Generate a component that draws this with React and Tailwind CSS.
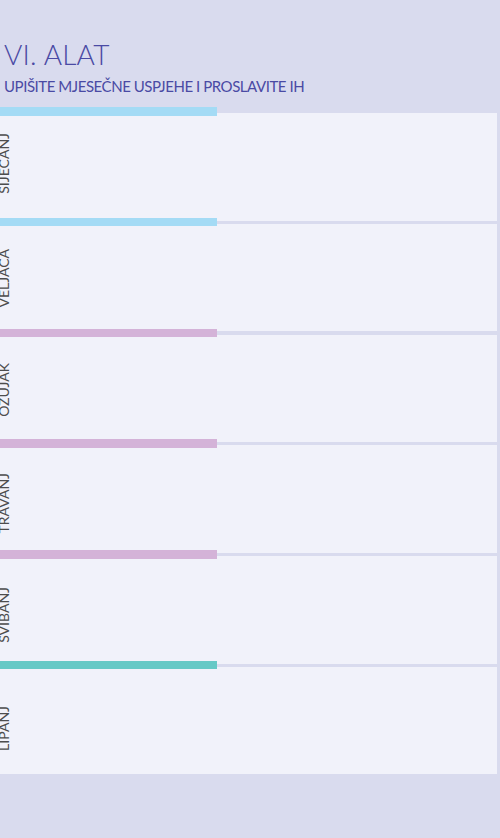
import React from 'react';

const months = [
  { name: 'SIJEČANJ', bar: 'bg-[#a4dbf5]', offset: 'mt-[20px]' },
  { name: 'VELJAČA', bar: 'bg-[#a4dbf5]', offset: 'mt-[25px]' },
  { name: 'OŽUJAK', bar: 'bg-[#d4b3d8]', offset: 'mt-[28px]' },
  { name: 'TRAVANJ', bar: 'bg-[#d4b3d8]', offset: 'mt-[28px]' },
  { name: 'SVIBANJ', bar: 'bg-[#d4b3d8]', offset: 'mt-[31px]' },
  { name: 'LIPANJ', bar: 'bg-[#66c9c6]', offset: 'mt-[39px]' },
];

const MonthRow = ({ name, bar, offset }) => (
  <div className="relative h-[107.5px] w-[497px] bg-[#f1f2fa]">
    {/* coloured tab over the top edge */}
    <div className={`absolute left-0 top-[-6px] h-[8.5px] w-[217px] ${bar}`} />
    <div className="h-full overflow-hidden">
      <div
        className={`${offset} ml-[-3px] w-fit rotate-180 text-[14px] leading-[14px] text-[#4d4d4d] [writing-mode:vertical-rl]`}
      >
        {name}
      </div>
    </div>
  </div>
);

export default function App() {
  return (
    <div className="min-h-[838px] w-[500px] bg-[#d9dbee] font-['Lato',sans-serif]">
      <div className="px-[4px] pt-[37px]">
        <h1 className="text-[28px] font-light leading-[34px] tracking-[0.2px] text-[#4a4aa4]">
          VI. ALAT
        </h1>
        <p className="mt-[6px] text-[15px] leading-[18px] tracking-[-0.45px] text-[#4a4aa4]">
          UPIŠITE MJESEČNE USPJEHE I PROSLAVITE IH
        </p>
      </div>
      <div className="mt-[18px] flex flex-col gap-[3.25px]">
        {months.map((m) => (
          <MonthRow key={m.name} {...m} />
        ))}
      </div>
    </div>
  );
}
